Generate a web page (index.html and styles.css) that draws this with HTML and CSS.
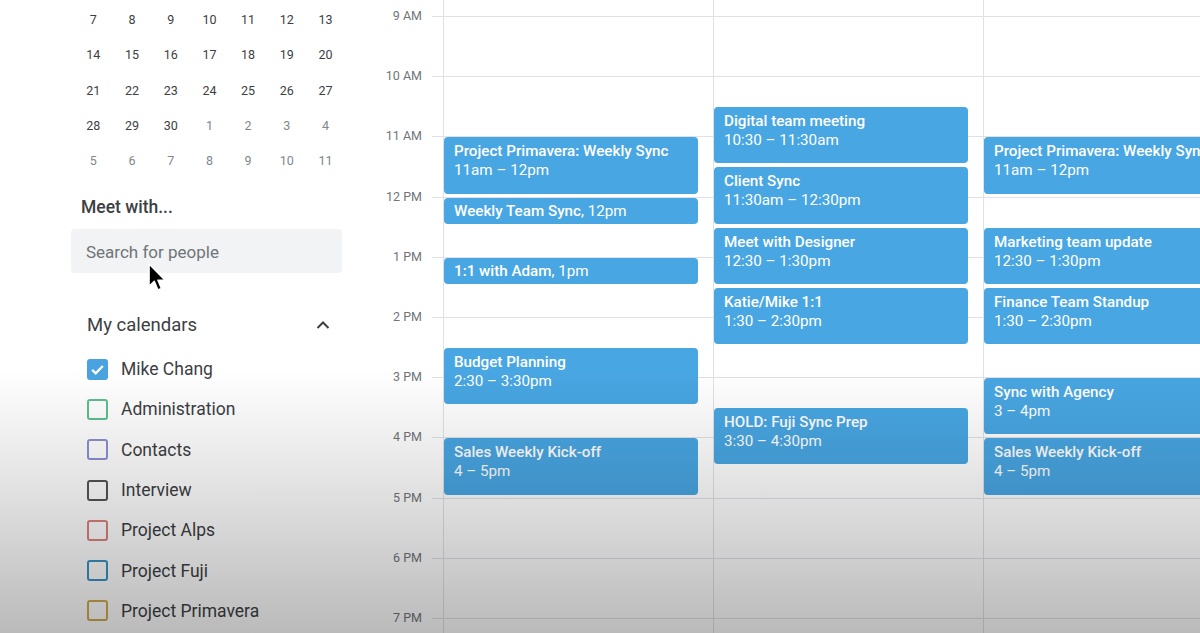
FILE: index.html
```html
<!DOCTYPE html>
<html lang="en">
<head>
<meta charset="utf-8">
<title>Calendar</title>
<link rel="stylesheet" href="styles.css">
</head>
<body>
<div class="app">
  <aside class="sidebar">
    <div class="mini-cal">
      <span>7</span><span>8</span><span>9</span><span>10</span><span>11</span><span>12</span><span>13</span>
      <span>14</span><span>15</span><span>16</span><span>17</span><span>18</span><span>19</span><span>20</span>
      <span>21</span><span>22</span><span>23</span><span>24</span><span>25</span><span>26</span><span>27</span>
      <span>28</span><span>29</span><span>30</span><span class="other">1</span><span class="other">2</span><span class="other">3</span><span class="other">4</span>
      <span class="other">5</span><span class="other">6</span><span class="other">7</span><span class="other">8</span><span class="other">9</span><span class="other">10</span><span class="other">11</span>
    </div>
    <div class="meet-title">Meet with...</div>
    <div class="search">Search for people</div>
    <div class="section-head">
      <span>My calendars</span>
      <svg class="chevron" width="24" height="24" viewBox="0 0 24 24"><path d="M6.5 15 L12 9.5 L17.5 15" fill="none" stroke="#3c4043" stroke-width="2"/></svg>
    </div>
    <ul class="cal-list">
      <li><span class="box checked" style="--c:#4aa3e0"><svg width="17" height="17" viewBox="0 0 24 24"><path d="M4.5 12.5 L9.5 17.5 L19.5 7" fill="none" stroke="#fff" stroke-width="3.2"/></svg></span>Mike Chang</li>
      <li><span class="box" style="--c:#5cbf8f"></span>Administration</li>
      <li><span class="box" style="--c:#8d90d2"></span>Contacts</li>
      <li><span class="box" style="--c:#555555"></span>Interview</li>
      <li><span class="box" style="--c:#dc817b"></span>Project Alps</li>
      <li><span class="box" style="--c:#3a92c8"></span>Project Fuji</li>
      <li><span class="box" style="--c:#cfab4e"></span>Project Primavera</li>
    </ul>
  </aside>

  <section class="calendar">
    <div class="gutter">
      <div class="gutter-pad"></div>
      <div class="hour"><span>9 AM</span></div>
      <div class="hour"><span>10 AM</span></div>
      <div class="hour"><span>11 AM</span></div>
      <div class="hour"><span>12 PM</span></div>
      <div class="hour"><span>1 PM</span></div>
      <div class="hour"><span>2 PM</span></div>
      <div class="hour"><span>3 PM</span></div>
      <div class="hour"><span>4 PM</span></div>
      <div class="hour"><span>5 PM</span></div>
      <div class="hour"><span>6 PM</span></div>
      <div class="hour"><span>7 PM</span></div>
    </div>
    <div class="days">
      <div class="day">
        <div class="event" style="grid-row: 6 / 8"><b>Project Primavera: Weekly Sync</b><span>11am – 12pm</span></div>
        <div class="event short" style="grid-row: 8 / 9"><p><b>Weekly Team Sync</b>, 12pm</p></div>
        <div class="event short" style="grid-row: 10 / 11"><p><b>1:1 with Adam</b>, 1pm</p></div>
        <div class="event" style="grid-row: 13 / 15"><b>Budget Planning</b><span>2:30 – 3:30pm</span></div>
        <div class="event" style="grid-row: 16 / 18"><b>Sales Weekly Kick-off</b><span>4 – 5pm</span></div>
      </div>
      <div class="day">
        <div class="event" style="grid-row: 5 / 7"><b>Digital team meeting</b><span>10:30 – 11:30am</span></div>
        <div class="event" style="grid-row: 7 / 9"><b>Client Sync</b><span>11:30am – 12:30pm</span></div>
        <div class="event" style="grid-row: 9 / 11"><b>Meet with Designer</b><span>12:30 – 1:30pm</span></div>
        <div class="event" style="grid-row: 11 / 13"><b>Katie/Mike 1:1</b><span>1:30 – 2:30pm</span></div>
        <div class="event" style="grid-row: 15 / 17"><b>HOLD: Fuji Sync Prep</b><span>3:30 – 4:30pm</span></div>
      </div>
      <div class="day">
        <div class="event" style="grid-row: 6 / 8"><b>Project Primavera: Weekly Sync</b><span>11am – 12pm</span></div>
        <div class="event" style="grid-row: 9 / 11"><b>Marketing team update</b><span>12:30 – 1:30pm</span></div>
        <div class="event" style="grid-row: 11 / 13"><b>Finance Team Standup</b><span>1:30 – 2:30pm</span></div>
        <div class="event" style="grid-row: 14 / 16"><b>Sync with Agency</b><span>3 – 4pm</span></div>
        <div class="event" style="grid-row: 16 / 18"><b>Sales Weekly Kick-off</b><span>4 – 5pm</span></div>
      </div>
    </div>
  </section>

  <div class="shade"></div>
  <svg class="cursor" width="19" height="29" viewBox="0 0 13 20"><path d="M0.7 0.7 L0.7 16 L4.3 12.6 L6.8 18.6 L9.2 17.6 L6.8 11.8 L11.6 11.8 Z" fill="#000" stroke="#fff" stroke-width="1" stroke-linejoin="round"/></svg>
</div>
</body>
</html>
```

FILE: styles.css
```css
* { box-sizing: border-box; }
html, body { margin: 0; padding: 0; }
body {
  width: 1200px;
  height: 633px;
  overflow: hidden;
  background: #fff;
  font-family: Roboto, "Liberation Sans", sans-serif;
  color: #3c4043;
}
.app {
  position: relative;
  display: flex;
  width: 1200px;
  height: 633px;
  overflow: hidden;
}

/* Sidebar */
.sidebar {
  width: 360px;
  flex: none;
  padding: 2px 18px 0 71px;
}
.mini-cal {
  display: grid;
  grid-template-columns: repeat(7, 38.7px);
  grid-auto-rows: 35.3px;
  margin-left: 3px;
  font-size: 12.5px;
  color: #3c4043;
}
.mini-cal span {
  display: flex;
  align-items: center;
  justify-content: center;
}
.mini-cal .other { color: #80868b; }

.meet-title {
  margin-top: 17.5px;
  padding-left: 10px;
  font-size: 17.5px;
  line-height: 22px;
  font-weight: 500;
  color: #3c4043;
}
.search {
  margin-top: 11px;
  height: 44px;
  border-radius: 4px;
  background: #f1f3f4;
  padding: 2px 0 0 15px;
  display: flex;
  align-items: center;
  font-size: 17px;
  color: #70757a;
}
.section-head {
  margin-top: 40px;
  height: 24px;
  display: flex;
  align-items: center;
  justify-content: space-between;
  padding: 0 7px 0 16px;
  font-size: 18.5px;
  color: #3c4043;
}
.chevron { display: block; }
.cal-list {
  list-style: none;
  margin: 12px 0 0;
  padding: 0 0 0 16px;
}
.cal-list li {
  height: 40.3px;
  display: flex;
  align-items: center;
  font-size: 17.5px;
  color: #3c4043;
}
.box {
  width: 21px;
  height: 21px;
  border: 2px solid var(--c);
  border-radius: 3px;
  margin-right: 13px;
  flex: none;
  display: flex;
  align-items: center;
  justify-content: center;
}
.box.checked { background: var(--c); }
.box svg { display: block; }

/* Calendar */
.calendar {
  flex: 1;
  display: flex;
  min-width: 0;
}
.gutter {
  width: 72px;
  flex: none;
  padding-right: 10px;
  display: flex;
  flex-direction: column;
}
.gutter-pad { height: 16px; flex: none; }
.hour {
  height: 60.2px;
  flex: none;
  text-align: right;
  font-size: 12.5px;
  line-height: 16px;
  color: #70757a;
}
.hour span { display: block; margin-top: -8px; }

.days {
  flex: 1;
  display: flex;
  padding-left: 11px;
  overflow: hidden;
  background-image: repeating-linear-gradient(to bottom, #dfe1e5 0, #dfe1e5 1px, transparent 1px, transparent 60.2px);
  background-position: 0 16px;
  background-repeat: repeat-x;
}
.day {
  width: 271px;
  flex: none;
  border-left: 1px solid #dfe1e5;
  margin-left: -1px;
  display: grid;
  grid-template-rows: 16px repeat(22, 30.1px);
  grid-template-columns: 254px;
  align-content: start;
}
.day:first-child { margin-left: 0; }
.event {
  grid-column: 1;
  margin: 1px 0 3px;
  background: #48a6e2;
  border-radius: 4px;
  color: #fff;
  padding: 5px 10px 0;
  font-size: 15.2px;
  line-height: 19px;
  display: flex;
  flex-direction: column;
  overflow: hidden;
  white-space: nowrap;
}
.event b { font-weight: 500; }
.event span { font-weight: 400; }
.event p { margin: 0; }
.event.short { padding-top: 4px; }

/* Overlays */
.shade {
  position: absolute;
  left: 0;
  right: 0;
  top: 370px;
  bottom: 0;
  background: linear-gradient(to bottom, rgba(0,0,0,0) 0%, rgba(0,0,0,0.1) 40%, rgba(0,0,0,0.27) 100%);
  pointer-events: none;
}
.cursor {
  position: absolute;
  left: 148px;
  top: 263px;
  pointer-events: none;
}
```
